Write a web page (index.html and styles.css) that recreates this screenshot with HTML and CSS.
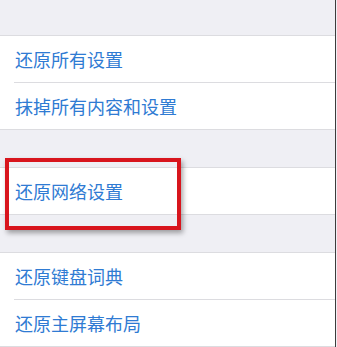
FILE: index.html
```html
<!DOCTYPE html>
<html lang="zh-CN">
<head>
    <meta charset="UTF-8">
    <meta name="viewport" content="width=device-width, initial-scale=1.0">
    <title>还原</title>
    <link rel="stylesheet" href="styles.css">
</head>
<body>

    <div class="screen">
        <div class="group first">
            <div class="row">还原所有设置</div>
            <div class="row">抹掉所有内容和设置</div>
        </div>

        <div class="group">
            <div class="row">还原网络设置</div>
        </div>

        <div class="group">
            <div class="row">还原键盘词典</div>
            <div class="row">还原主屏幕布局</div>
        </div>

        <!-- highlight around the network reset item -->
        <div class="highlight"></div>
    </div>

</body>
</html>
```

FILE: styles.css
```css
body, html {
    margin: 0;
    padding: 0;
    background: #efeff4;
    font-family: "Noto Sans CJK SC", "Noto Sans", sans-serif;
    overflow: hidden;
}

.screen {
    position: relative;
    width: 336px;
    height: 347px;
    border-right: 1px solid #3c3c3c;
    padding-top: 35px;
    box-sizing: border-box;
    overflow: hidden;
}

.group {
    background: #fff;
    border-top: 1px solid #dcdce0;
    border-bottom: 1px solid #dcdce0;
    margin-top: 37px;
}

.group.first {
    margin-top: 0;
}

.row {
    height: 46px;
    margin-left: 14px;
    padding-left: 1px;
    display: flex;
    align-items: center;
    font-size: 18px;
    color: #2f7bd3;
}

.row + .row {
    border-top: 1px solid #dcdce0;
}

.highlight {
    position: absolute;
    left: 5px;
    top: 158px;
    width: 168px;
    height: 64px;
    border: 4px solid #d8151d;
    box-shadow: 2px 3px 5px rgba(0, 0, 0, 0.35);
}
```
